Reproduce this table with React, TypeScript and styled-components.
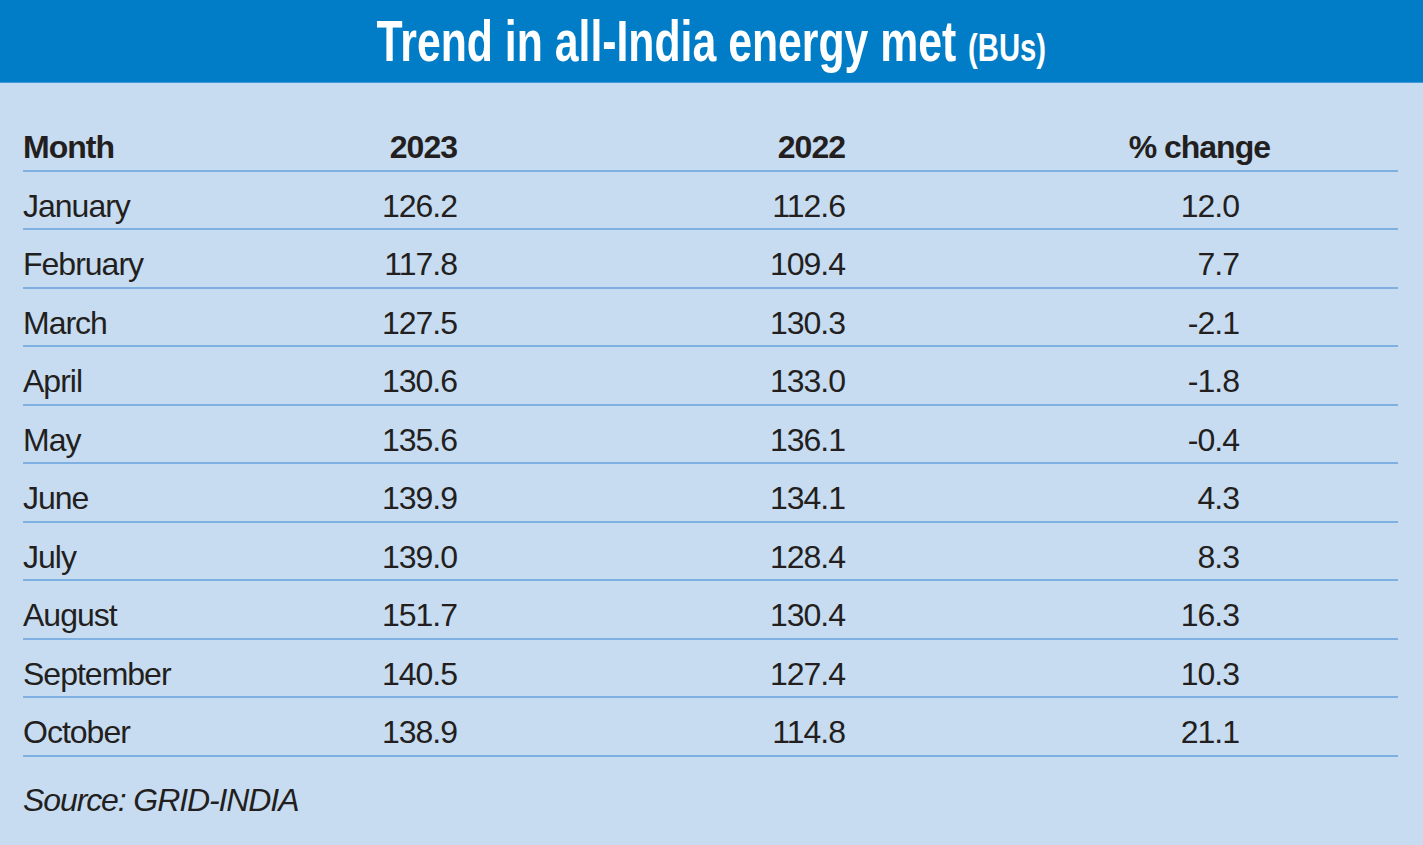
import React from "react";
import styled, { createGlobalStyle } from "styled-components";

const Global = createGlobalStyle`
  html, body {
    margin: 0;
    padding: 0;
    background: #c7dcf1;
  }
  body {
    font-family: "Liberation Sans", Arial, sans-serif;
    color: #231f20;
  }
`;

const Page = styled.div`
  width: 1423px;
  min-height: 845px;
  background: #c7dcf1;
`;

const Banner = styled.header`
  height: 82px;
  background: #007dc6;
  border-bottom: 1px solid #3d9ad9;
  display: flex;
  justify-content: center;
  overflow: hidden;
`;

const Title = styled.h1`
  margin: 0;
  font-family: "Liberation Sans", Arial, sans-serif;
  font-weight: 700;
  font-size: 57px;
  line-height: 82px;
  color: #ffffff;
  white-space: nowrap;
  transform: scaleX(0.75);
  transform-origin: center;
`;

const Unit = styled.span`
  font-size: 39px;
`;

const Body = styled.main`
  padding: 30px 25px 0 23px;
`;

const Row = styled.div`
  display: grid;
  grid-template-columns: 277px 157px 388px 425px 1fr;
  height: 58.5px;
  box-sizing: border-box;
  border-bottom: 2px solid #7eb0e2;
`;

const Cell = styled.div<{ $align?: "left" | "right"; $pad?: number; $bold?: boolean }>`
  padding-top: 17px;
  padding-right: ${(p) => p.$pad ?? 0}px;
  text-align: ${(p) => p.$align ?? "right"};
  font-size: 32px;
  line-height: 35px;
  letter-spacing: -1px;
  font-weight: ${(p) => (p.$bold ? 700 : 400)};
  white-space: nowrap;
`;

const Source = styled.p`
  margin: 26px 0 0;
  font-size: 32px;
  line-height: 35px;
  letter-spacing: -1.1px;
  font-style: italic;
`;

const data: [string, string, string, string][] = [
  ["January", "126.2", "112.6", "12.0"],
  ["February", "117.8", "109.4", "7.7"],
  ["March", "127.5", "130.3", "-2.1"],
  ["April", "130.6", "133.0", "-1.8"],
  ["May", "135.6", "136.1", "-0.4"],
  ["June", "139.9", "134.1", "4.3"],
  ["July", "139.0", "128.4", "8.3"],
  ["August", "151.7", "130.4", "16.3"],
  ["September", "140.5", "127.4", "10.3"],
  ["October", "138.9", "114.8", "21.1"],
];

export default function App() {
  return (
    <Page>
      <Global />
      <Banner>
        <Title>
          Trend in all-India energy met <Unit>(BUs)</Unit>
        </Title>
      </Banner>
      <Body>
        <Row>
          <Cell $align="left" $bold>Month</Cell>
          <Cell $bold>2023</Cell>
          <Cell $bold>2022</Cell>
          <Cell $bold>% change</Cell>
          <div />
        </Row>
        {data.map(([m, a, b, c]) => (
          <Row key={m}>
            <Cell $align="left">{m}</Cell>
            <Cell>{a}</Cell>
            <Cell>{b}</Cell>
            <Cell $pad={31}>{c}</Cell>
            <div />
          </Row>
        ))}
        <Source>Source: GRID-INDIA</Source>
      </Body>
    </Page>
  );
}
